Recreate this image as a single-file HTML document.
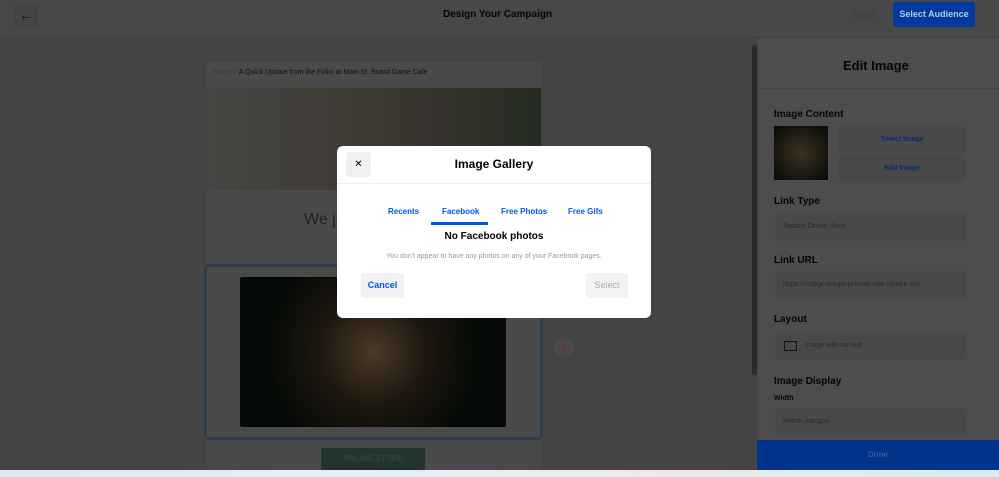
<!DOCTYPE html>
<html><head><style>
*{box-sizing:border-box;margin:0;padding:0}
body{width:999px;height:477px;overflow:hidden;position:relative;font-family:"Liberation Sans",sans-serif;background:#444}
.a{position:absolute}
.lbl{font-size:10px;color:#050505;font-weight:bold}
.fld{position:absolute;left:775px;width:191px;height:28px;background:#494949;border-radius:4px;font-size:7px;color:#2a2a2a;padding:10px 8px}
.m{z-index:20}
</style></head><body>
<div class="a" style="left:0;top:0;width:999px;height:38px;background:#484848;border-bottom:1px solid #404040"></div>
<div class="a" style="left:14px;top:4px;width:24px;height:22px;background:#444;font-size:14px;text-align:center;line-height:22px;color:#111">&larr;</div>
<div class="a" style="left:443px;top:9px;font-size:10px;font-weight:bold;color:#050505">Design Your Campaign</div>
<div class="a" style="left:852px;top:10px;font-size:8px;color:#3a3a3a">Saved</div>
<div class="a" style="left:893px;top:2px;width:82px;height:25px;background:#003a9e;border-radius:3px;color:#b8c8e8;font-size:9px;font-weight:bold;text-align:center;line-height:25px">Select Audience</div>
<div class="a" style="left:207px;top:62px;width:334px;height:408px;background:#4a4a4a"></div>
<div class="a" style="left:212px;top:69px;font-size:7px;color:#111"><span style="color:#3a3a3a">Subject:</span> A Quick Update from the Folks at Main St. Board Game Cafe</div>
<div class="a" style="left:207px;top:88px;width:334px;height:102px;background:linear-gradient(90deg,#464644,#403c36 40%,#35332c 70%,#262c22)"></div>
<div class="a" style="left:304px;top:211px;font-size:16px;color:#222">We ju</div>
<div class="a" style="left:204px;top:264px;width:339px;height:176px;border:3px solid #2e3d4e;border-radius:4px;background:#4a4a4a"></div>
<div class="a" style="left:240px;top:277px;width:266px;height:150px;background:radial-gradient(circle at 50% 50%,#4a3a28 0,#1e170f 35%,#050a06 70%);border-radius:2px"></div>
<div class="a" style="left:321px;top:448px;width:104px;height:22px;background:#24332c;color:#34423c;font-size:8px;font-weight:bold;text-align:center;line-height:22px">ONLINE STORE</div>
<div class="a" style="left:554px;top:337px;width:20px;height:20px;border-radius:50%;background:#4a4a4a;color:#8a2020;font-size:12px;text-align:center;line-height:20px">×</div>
<div class="a" style="left:752px;top:45px;width:5px;height:330px;background:#2a2a2a;border-radius:3px"></div>
<div class="a" style="left:757px;top:38px;width:242px;height:432px;background:#4d4d4d;border-left:1px solid #444"></div>
<div class="a" style="left:843px;top:58px;font-size:13px;font-weight:bold;color:#050505">Edit Image</div>
<div class="a" style="left:757px;top:88px;width:242px;height:1px;background:#444"></div>
<div class="a lbl" style="left:774px;top:109px">Image Content</div>
<div class="a" style="left:774px;top:126px;width:54px;height:54px;background:radial-gradient(#3e3020,#050a06)"></div>
<div class="a" style="left:838px;top:126px;width:128px;height:27px;background:#494949;border-radius:4px;color:#0a2a70;font-size:7px;font-weight:bold;text-align:center;line-height:27px">Select Image</div>
<div class="a" style="left:838px;top:155px;width:128px;height:27px;background:#494949;border-radius:4px;color:#0a2a70;font-size:7px;font-weight:bold;text-align:center;line-height:27px">Edit Image</div>
<div class="a lbl" style="left:774px;top:196px">Link Type</div>
<div class="fld" style="top:213px">Square Online Store</div>
<div class="a lbl" style="left:774px;top:255px">Link URL</div>
<div class="fld" style="top:271px">https://msbgc-magic-presale-site.square.site</div>
<div class="a lbl" style="left:774px;top:314px">Layout</div>
<div class="fld" style="top:332px;padding-left:30px">Image with no text</div>
<div class="a" style="left:784px;top:341px;width:13px;height:10px;border:1px solid #111"></div>
<div class="a lbl" style="left:774px;top:376px">Image Display</div>
<div class="a" style="left:774px;top:395px;font-size:7px;font-weight:bold;color:#050505">Width</div>
<div class="fld" style="top:408px">Within margins</div>
<div class="a" style="left:757px;top:440px;width:242px;height:30px;background:#00348a;color:#3a5a9a;font-size:8px;font-weight:bold;text-align:center;line-height:30px">Done</div>
<div class="a" style="left:0;top:470px;width:999px;height:7px;background:linear-gradient(90deg,#dde8f0,#e6eef6,#f0e8e8,#dde8f0)"></div>
<div class="a m" style="left:337px;top:146px;width:314px;height:172px;background:#fff;border-radius:6px"></div>
<div class="a m" style="left:346px;top:152px;width:25px;height:25px;background:#f0f0f0;border-radius:3px;text-align:center;line-height:25px;font-size:10px">✕</div>
<div class="a m" style="left:337px;top:157px;width:314px;text-align:center;font-size:12px;font-weight:bold">Image Gallery</div>
<div class="a m" style="left:337px;top:183px;width:314px;height:1px;background:#eee"></div>
<div class="a m" style="left:388px;top:207px;font-size:8px;color:#0055e6;font-weight:bold">Recents</div>
<div class="a m" style="left:442px;top:207px;font-size:8px;color:#0055e6;font-weight:bold">Facebook</div>
<div class="a m" style="left:431px;top:222px;width:57px;height:3px;background:#0055e6"></div>
<div class="a m" style="left:501px;top:207px;font-size:8px;color:#0055e6;font-weight:bold">Free Photos</div>
<div class="a m" style="left:568px;top:207px;font-size:8px;color:#0055e6;font-weight:bold">Free Gifs</div>
<div class="a m" style="left:337px;top:231px;width:314px;text-align:center;font-size:10px;font-weight:bold">No Facebook photos</div>
<div class="a m" style="left:337px;top:253px;width:314px;text-align:center;font-size:7px;color:#999">You don't appear to have any photos on any of your Facebook pages.</div>
<div class="a m" style="left:361px;top:273px;width:43px;height:25px;background:#f2f2f2;border-radius:3px;color:#0055e6;font-size:9px;font-weight:bold;text-align:center;line-height:25px">Cancel</div>
<div class="a m" style="left:586px;top:273px;width:42px;height:25px;background:#f2f2f2;border-radius:3px;color:#aaa;font-size:9px;text-align:center;line-height:25px">Select</div>
</body></html>
